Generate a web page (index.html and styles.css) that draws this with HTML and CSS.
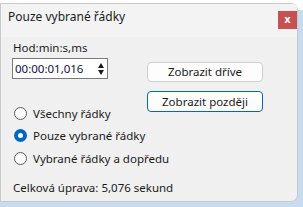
FILE: index.html
```html
<!DOCTYPE html>
<html>
<head>
    <title>Pouze vybrané řádky</title>
    <link rel="stylesheet" href="styles.css">
</head>
<body>
    <div class="window">
        <div class="titlebar">
            <span class="title">Pouze vybrané řádky</span>
            <div class="close">x</div>
        </div>

        <div class="content">
            <div class="main">
                <div class="left">
                    <div class="label">Hod:min:s,ms</div>
                    <div class="spinbox">
                        <span class="value">00:00:01,016</span>
                        <div class="arrows">
                            <span class="up"></span>
                            <span class="down"></span>
                        </div>
                    </div>

                    <div class="radios">
                        <div class="radio">
                            <span class="dot"></span>
                            <span>Všechny řádky</span>
                        </div>
                        <div class="radio checked">
                            <span class="dot"></span>
                            <span>Pouze vybrané řádky</span>
                        </div>
                        <div class="radio">
                            <span class="dot"></span>
                            <span>Vybrané řádky a dopředu</span>
                        </div>
                    </div>
                </div>

                <div class="right">
                    <div class="button">Zobrazit dříve</div>
                    <div class="button default">Zobrazit později</div>
                </div>
            </div>

            <div class="status">Celková úprava: 5,076 sekund</div>
        </div>
    </div>
</body>
</html>
```

FILE: styles.css
```css
:root {
    --accent: #0067c0;
}

body {
    margin: 0;
    height: 207px;
    overflow: hidden;
    background: linear-gradient(#ffffff 0 10px, #c7dcef 10px);
    font-family: "Noto Sans", "Liberation Sans", sans-serif;
    font-size: 11.5px;
    color: #1b1b1b;
}

.window {
    margin-top: 3px;
    width: 298px;
    height: 199px;
    background-color: #f0f0f0;
    border: 1px solid #c9c9c9;
    border-radius: 0 7px 7px 0;
    box-sizing: border-box;
}

.titlebar {
    display: flex;
    align-items: flex-start;
    height: 33px;
    background-color: #f3f3f3;
}

.title {
    margin: 5px 0 0 7px;
    font-size: 12px;
    line-height: 16px;
}

.close {
    margin: 7px 0 0 auto;
    width: 19px;
    height: 18px;
    background-color: #c75050;
    color: #ffffff;
    font-family: "DejaVu Sans", sans-serif;
    font-weight: bold;
    font-size: 10px;
    line-height: 17px;
    text-align: center;
}

.content {
    padding: 4px 0 0 11px;
}

.main {
    display: flex;
    align-items: flex-start;
}

.left {
    width: 96px;
}

.label {
    padding-left: 1px;
    line-height: 14px;
    margin-bottom: 3px;
}

.spinbox {
    display: flex;
    align-items: center;
    height: 21px;
    background-color: #ffffff;
    border: 1px solid #7a7a7a;
    box-sizing: border-box;
    padding-left: 2px;
}

.value {
    color: #10123a;
}

.arrows {
    display: flex;
    flex-direction: column;
    gap: 2px;
    margin-left: auto;
    margin-right: 3px;
}

.up,
.down {
    width: 0;
    height: 0;
    border-left: 3.5px solid transparent;
    border-right: 3.5px solid transparent;
}

.up {
    border-bottom: 5px solid #1b1b1b;
}

.down {
    border-top: 5px solid #1b1b1b;
}

.radios {
    margin-top: 23px;
    width: 200px;
}

.radio {
    display: flex;
    align-items: center;
    gap: 6px;
    height: 22.5px;
    padding-left: 2px;
}

.dot {
    width: 13px;
    height: 13px;
    border: 1px solid #5c5c5c;
    border-radius: 50%;
    box-sizing: border-box;
    background-color: #fdfdfd;
}

.radio.checked .dot {
    border: 4px solid var(--accent);
    background-color: #ffffff;
}

.right {
    display: flex;
    flex-direction: column;
    gap: 9px;
    margin: 21px 0 0 39px;
}

.button {
    width: 116px;
    height: 20px;
    background-color: #fdfdfd;
    border: 1px solid #d0d0d0;
    border-radius: 4px;
    box-sizing: border-box;
    text-align: center;
    line-height: 18px;
}

.button.default {
    height: 21px;
    border-color: var(--accent);
    line-height: 19px;
}

.status {
    margin-top: 11px;
    padding-left: 1px;
    line-height: 14px;
}
```
